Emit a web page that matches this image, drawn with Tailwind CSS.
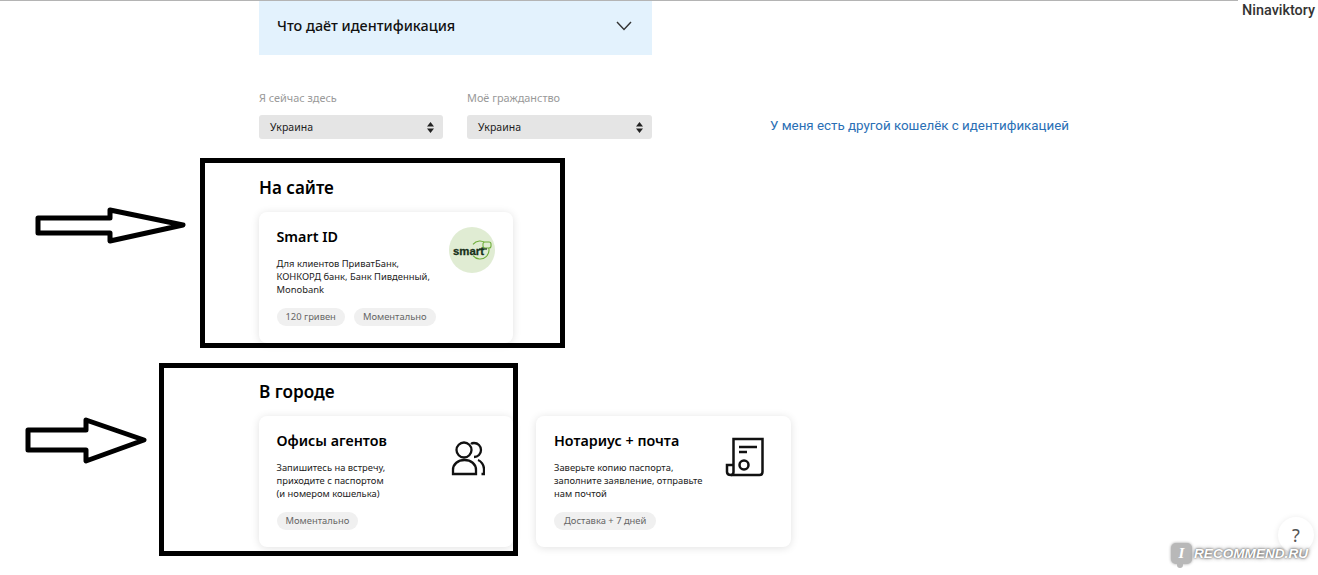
<!DOCTYPE html>
<html lang="ru">
<head>
  <meta charset="UTF-8" />
  <title>Идентификация</title>
  <script src="https://cdn.jsdelivr.net/npm/@tailwindcss/browser@4"></script>
</head>
<body class="bg-white font-['Noto_Sans',sans-serif] text-black">
  <div class="relative w-[1318px] h-[575px] overflow-hidden">
    <!-- top line + nick -->
    <div class="h-px w-[1238px] bg-[#b4b4b4]"></div>
    <div class="absolute right-[3px] top-[2px] font-['Roboto',sans-serif] text-[14.4px] leading-[18px] font-medium text-[#333]">Ninaviktory</div>

    <main class="pl-[259px]">
      <div class="flex h-[54px] w-[393px] items-center justify-between bg-[#e3f2fd] pb-[4px] pl-[18px] pr-[20px]">
        <span class="text-[14.4px] font-medium text-[#111]">Что даёт идентификация</span>
        <svg width="16" height="10" viewBox="0 0 16 10" fill="none" stroke="#333" stroke-width="1.4"><path d="M1 1l7 7.5L15 1" /></svg>
      </div>

      <div class="mt-[35px] flex items-end">
        <label class="block w-[184px]">
          <span class="block text-[10.9px] leading-[16px] text-[#999]">Я сейчас здесь</span>
          <span class="mt-[9px] flex h-[24px] items-center justify-between rounded-[3px] bg-[#e5e5e5] pl-[11px] pr-[9px] pt-px text-[10.5px] text-[#222]">Украина
            <svg width="7" height="11" viewBox="0 0 7 11" fill="#222"><path d="M3.5 0L7 4.5H0zM3.5 11L0 6.5h7z" /></svg>
          </span>
        </label>
        <label class="ml-[24px] block w-[185px]">
          <span class="block text-[10.9px] leading-[16px] text-[#999]">Моё гражданство</span>
          <span class="mt-[9px] flex h-[24px] items-center justify-between rounded-[3px] bg-[#e5e5e5] pl-[11px] pr-[9px] pt-px text-[10.5px] text-[#222]">Украина
            <svg width="7" height="11" viewBox="0 0 7 11" fill="#222"><path d="M3.5 0L7 4.5H0zM3.5 11L0 6.5h7z" /></svg>
          </span>
        </label>
        <a class="ml-[118px] self-end pb-[4px] font-['Roboto',sans-serif] text-[13.35px] leading-[18px] text-[#2a6fb5]">У меня есть другой кошелёк с идентификацией</a>
      </div>

      <h2 class="mt-[37px] text-[17px] leading-[24px] font-semibold">На сайте</h2>
      <div class="mt-[12px] flex">
        <article class="relative h-[131px] w-[254px] rounded-[8px] bg-white pl-[17.5px] pt-[14px] shadow-[0_1px_8px_rgba(0,0,0,0.12)]">
          <h3 class="text-[14.3px] leading-[21px] font-semibold">Smart ID</h3>
          <p class="mt-[10px] text-[9.4px] leading-[13px] text-[#222]">Для клиентов ПриватБанк,<br />КОНКОРД банк, Банк Пивденный,<br />Monobank</p>
          <div class="mt-[12px] flex gap-[9px]">
            <span class="flex h-[18px] items-center rounded-full bg-[#f0f0f0] px-[9px] text-[9.4px] text-[#666]">120 гривен</span>
            <span class="flex h-[18px] items-center rounded-full bg-[#f0f0f0] px-[9px] text-[9.4px] text-[#666]">Моментально</span>
          </div>
          <svg class="absolute left-[190px] top-[15px]" width="46" height="46" viewBox="0 0 46 46">
            <circle cx="23" cy="23" r="23" fill="#e0ecd3" />
            <path d="M24 17.400A9 9 0 1 1 24 28.600" fill="none" stroke="#6fae3a" stroke-width="1.100" />
            <rect x="34" y="15" width="8" height="6" rx="2" fill="#e0ecd3" stroke="#6fae3a" stroke-width="1.100" />
            <text x="4" y="27.500" font-family="Liberation Sans, sans-serif" font-size="11.5" font-weight="700" fill="#17301a" stroke="#17301a" stroke-width="0.300" textLength="31" lengthAdjust="spacingAndGlyphs">smart</text>
            <path d="M30 22h8" stroke="#17301a" stroke-width="1.200" />
          </svg>
        </article>
      </div>

      <h2 class="mt-[37px] text-[17.2px] leading-[24px] font-semibold">В городе</h2>
      <div class="mt-[12px] flex gap-[23px]">
        <article class="relative h-[131px] w-[254px] rounded-[8px] bg-white pl-[17.5px] pt-[14px] shadow-[0_1px_8px_rgba(0,0,0,0.12)]">
          <h3 class="text-[14.3px] leading-[21px] font-semibold">Офисы агентов</h3>
          <p class="mt-[10px] text-[9.4px] leading-[13px] text-[#222]">Запишитесь на встречу,<br />приходите с паспортом<br />(и номером кошелька)</p>
          <div class="mt-[12px] flex">
            <span class="flex h-[18px] items-center rounded-full bg-[#f0f0f0] px-[9px] text-[9.4px] text-[#666]">Моментально</span>
          </div>
          <svg class="absolute left-[192px] top-[25px]" width="34" height="35" viewBox="0 0 34 35" fill="none" stroke="#111" stroke-width="2.300">
            <circle cx="13" cy="9" r="7.500" />
            <path d="M2 33v-4c0-6 5-10 11.500-10s11.500 4 11.500 10v4z" />
            <path d="M20 3c1-1 2-1 3-1 4 0 7 3 7 7s-3 7-7 7" />
            <path d="M27 19c3 1 6 5 6 9v5h-2.500" />
          </svg>
        </article>
        <article class="relative h-[131px] w-[255px] rounded-[8px] bg-white pl-[18px] pt-[14px] shadow-[0_1px_8px_rgba(0,0,0,0.12)]">
          <h3 class="text-[14.3px] leading-[21px] font-semibold">Нотариус + почта</h3>
          <p class="mt-[10px] text-[9.4px] leading-[13px] text-[#222]">Заверьте копию паспорта,<br />заполните заявление, отправьте<br />нам почтой</p>
          <div class="mt-[12px] flex">
            <span class="flex h-[18px] items-center rounded-full bg-[#f0f0f0] px-[10px] text-[9.4px] text-[#666]">Доставка + 7 дней</span>
          </div>
          <svg class="absolute left-[188px] top-[21px]" width="41" height="41" viewBox="0 0 41 41" fill="none" stroke="#111" stroke-width="2.500">
            <path d="M9.500 28V2H38.500V35c0 2-1.500 3-3 3H7" />
            <path d="M9.500 28H3v7c0 2 2 3 4 3s2.500-1 2.500-3V28" />
            <path d="M15 10h18M15 15h8" />
            <circle cx="20" cy="28" r="4.500" />
          </svg>
        </article>
      </div>
    </main>

    <!-- annotations drawn on top of the screenshot -->
    <div class="absolute left-[200px] top-[158px] h-[190px] w-[365px] border-[5px] border-black"></div>
    <div class="absolute left-[159px] top-[363px] h-[193px] w-[359px] border-[5px] border-black"></div>
    <svg class="absolute left-0 top-0" width="300" height="575" fill="none" stroke="#000" stroke-width="5" stroke-linejoin="round">
      <path d="M38 218H110V210L183 225L110 241V233H38Z" fill="#fff" />
      <path d="M28 430H86V420L144 440L86 461V450H28Z" fill="#fff" />
    </svg>

    <!-- help button + watermark -->
    <div class="absolute left-[1278px] top-[517px] flex h-[36px] w-[36px] items-center justify-center rounded-full bg-white text-[18px] text-[#555] shadow-[0_1px_6px_rgba(0,0,0,0.1)]">?</div>
    <div class="absolute left-[1171px] top-[543px] flex h-[21px] w-[21px] items-center justify-center rounded-[5px] bg-[#b8b8b8] font-['Liberation_Serif',serif] text-[15px] font-bold text-white italic shadow-[0_0_3px_#999]">I</div>
    <div class="absolute left-[1177px] top-[562px] h-[6px] w-[6px] rounded-b-[3px] bg-[#b8b8b8]"></div>
    <div class="absolute left-[1194px] top-[545px] font-['Liberation_Sans',sans-serif] text-[13.6px] leading-[18px] font-bold text-white italic [text-shadow:0_0_2px_#555,0_0_4px_#666]">RECOMMEND.RU</div>
  </div>
</body>
</html>
